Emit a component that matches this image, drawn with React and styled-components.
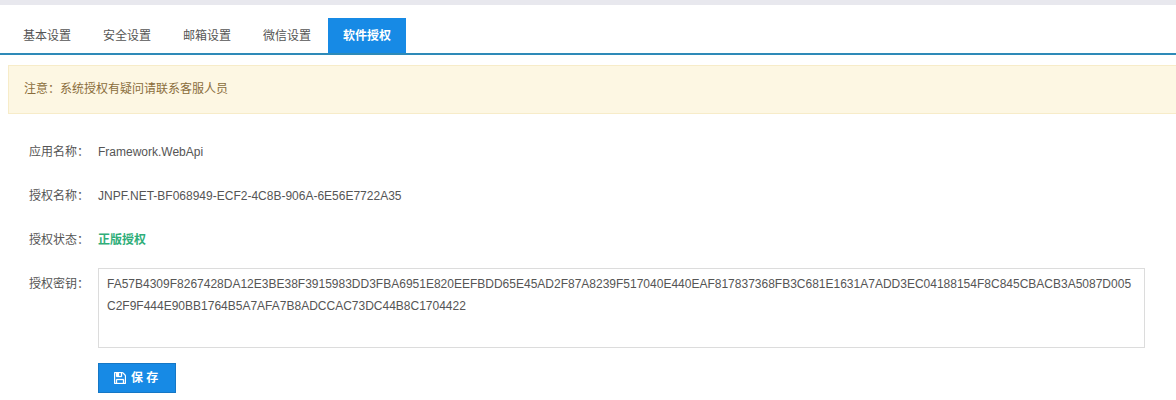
import { useState } from 'react';
import styled, { createGlobalStyle, ThemeProvider } from 'styled-components';

const theme = {
  colors: {
    primary: '#178ae5',
    primaryBorder: '#1577c5',
    line: '#2e8ab8',
    text: '#555555',
    success: '#2fae79',
    border: '#dcdcdc',
    topBar: '#e8e8ee',
    warning: '#8a6d3b',
    warningBg: '#fdf7e3',
    warningBorder: '#f7ecc9',
  },
};

const GlobalStyle = createGlobalStyle`
  *, *::before, *::after {
    box-sizing: border-box;
  }

  body {
    margin: 0;
    background: #fff;
    color: ${theme.colors.text};
    font-family: "Liberation Sans", "Noto Sans CJK SC", sans-serif;
    font-size: 12px;
    line-height: 22px;
  }

  button, textarea {
    font: inherit;
  }
`;

const Page = styled.div`
  border-top: 5px solid ${({ theme }) => theme.colors.topBar};
`;

const Tabs = styled.nav`
  display: flex;
  gap: 2px;
  padding: 13px 8px 0;
  border-bottom: 2px solid ${({ theme }) => theme.colors.line};
`;

const Tab = styled.button`
  height: 35px;
  padding: 0 15px;
  border: 0;
  cursor: pointer;
  background: ${({ $active, theme }) => ($active ? theme.colors.primary : 'transparent')};
  color: ${({ $active, theme }) => ($active ? '#fff' : theme.colors.text)};
  font-weight: ${({ $active }) => ($active ? 'bold' : 'normal')};
`;

const Notice = styled.div`
  margin: 10px 0 0 8px;
  padding: 12px 15px 13px;
  border: 1px solid ${({ theme }) => theme.colors.warningBorder};
  border-right: 0;
  background: ${({ theme }) => theme.colors.warningBg};
  color: ${({ theme }) => theme.colors.warning};
`;

const Form = styled.form`
  display: grid;
  grid-template-columns: 60px 1fr;
  column-gap: 9px;
  row-gap: 22px;
  padding: 27px 31px 7px 29px;
`;

const Label = styled.label`
  white-space: nowrap;
`;

const Value = styled.output`
  color: ${({ $success, theme }) => ($success ? theme.colors.success : 'inherit')};
  font-weight: ${({ $success }) => ($success ? 'bold' : 'normal')};
`;

const KeyField = styled.div`
  display: flex;
  flex-direction: column;
  align-items: flex-start;
  gap: 15px;
  margin-top: -5px;
`;

const KeyInput = styled.textarea`
  display: block;
  width: 100%;
  height: 80px;
  padding: 4px 8px;
  border: 1px solid ${({ theme }) => theme.colors.border};
  border-radius: 0;
  outline: none;
  resize: none;
  background: #fff;
  color: inherit;
`;

const SaveButton = styled.button`
  display: flex;
  align-items: center;
  gap: 5px;
  min-width: 78px;
  height: 30px;
  padding: 0 15px;
  border: 1px solid ${({ theme }) => theme.colors.primaryBorder};
  background: ${({ theme }) => theme.colors.primary};
  color: #fff;
  font-weight: bold;
  cursor: pointer;

  svg {
    width: 12px;
    height: 12px;
    fill: currentColor;
    stroke: currentColor;
    stroke-width: 40;
  }
`;

const SaveIcon = () => (
  <svg viewBox="0 128 1536 1536" aria-hidden="true">
    <path d="M384 1536h768v-384h-768v384zm896 0h128v-896q0-14-10-38.5t-20-34.5l-281-281q-10-10-34-20t-39-10v416q0 40-28 68t-68 28h-576q-40 0-68-28t-28-68v-416h-128v1280h128v-416q0-40 28-68t68-28h832q40 0 68 28t28 68v416zm-384-928v-320q0-13-9.5-22.5t-22.5-9.5h-192q-13 0-22.5 9.5t-9.5 22.5v320q0 13 9.5 22.5t22.5 9.5h192q13 0 22.5-9.5t9.5-22.5zm640 32v928q0 40-28 68t-68 28h-1344q-40 0-68-28t-28-68v-1344q0-40 28-68t68-28h928q40 0 88 20t76 48l280 280q28 28 48 76t20 88z" />
  </svg>
);

const tabs = ['基本设置', '安全设置', '邮箱设置', '微信设置', '软件授权'];

const fields = [
  { id: 'appName', label: '应用名称：', value: 'Framework.WebApi' },
  { id: 'licenseName', label: '授权名称：', value: 'JNPF.NET-BF068949-ECF2-4C8B-906A-6E56E7722A35' },
  { id: 'licenseStatus', label: '授权状态：', value: '正版授权', success: true },
];

const defaultKey =
  'FA57B4309F8267428DA12E3BE38F3915983DD3FBA6951E820EEFBDD65E45AD2F87A8239F517040E440EAF817837368FB3C681E1631A7ADD3EC04188154F8C845CBACB3A5087D005C2F9F444E90BB1764B5A7AFA7B8ADCCAC73DC44B8C1704422';

export default function App() {
  const [activeTab, setActiveTab] = useState('软件授权');
  const [licenseKey, setLicenseKey] = useState(defaultKey);

  return (
    <ThemeProvider theme={theme}>
      <GlobalStyle />
      <Page>
        <Tabs>
          {tabs.map((tab) => (
            <Tab
              key={tab}
              type="button"
              $active={tab === activeTab}
              onClick={() => setActiveTab(tab)}
            >
              {tab}
            </Tab>
          ))}
        </Tabs>
        <Notice>注意：系统授权有疑问请联系客服人员</Notice>
        <Form onSubmit={(e) => e.preventDefault()}>
          {fields.map(({ id, label, value, success }) => [
            <Label key={`${id}-label`} htmlFor={id}>{label}</Label>,
            <Value key={id} id={id} $success={success}>{value}</Value>,
          ])}
          <Label htmlFor="licenseKey">授权密钥：</Label>
          <KeyField>
            <KeyInput
              id="licenseKey"
              spellCheck={false}
              value={licenseKey}
              onChange={(e) => setLicenseKey(e.target.value)}
            />
            <SaveButton type="submit">
              <SaveIcon />
              保 存
            </SaveButton>
          </KeyField>
        </Form>
      </Page>
    </ThemeProvider>
  );
}
